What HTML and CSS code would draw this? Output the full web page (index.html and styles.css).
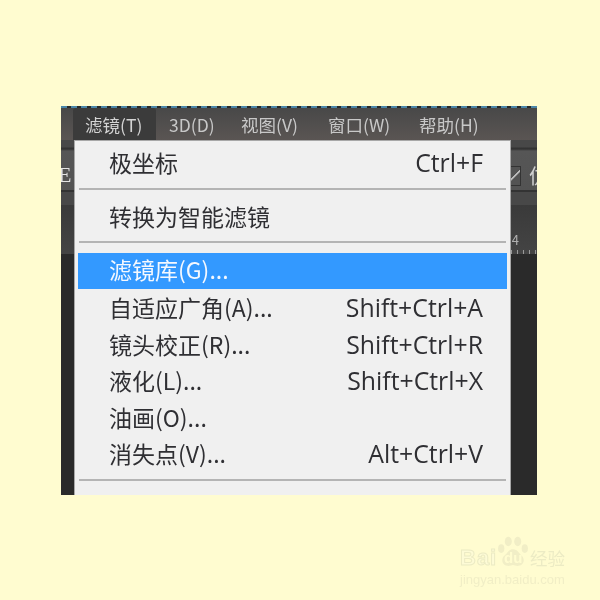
FILE: index.html
```html
<!DOCTYPE html>
<html lang="zh">
<head>
<meta charset="utf-8">
<title>滤镜菜单</title>
<link rel="stylesheet" href="styles.css">
</head>
<body>
<div class="window">
  <div class="menubar">
    <span class="top active">滤镜(T)</span>
    <span class="top">3D(D)</span>
    <span class="top">视图(V)</span>
    <span class="top">窗口(W)</span>
    <span class="top">帮助(H)</span>
  </div>
  <div class="toolbar">
    <span class="tool-left">E</span>
    <span class="tool-right"><span class="check"></span><span>仿</span></span>
  </div>
  <div class="ruler"><span class="ruler-num">4</span></div>
  <div class="canvas"></div>
  <div class="menu">
    <div class="row"><span>极坐标</span><span class="key">Ctrl+F</span></div>
    <div class="sep"></div>
    <div class="row"><span>转换为智能滤镜</span></div>
    <div class="sep"></div>
    <div class="row selected"><span>滤镜库(G)...</span></div>
    <div class="row"><span>自适应广角(A)...</span><span class="key">Shift+Ctrl+A</span></div>
    <div class="row"><span>镜头校正(R)...</span><span class="key">Shift+Ctrl+R</span></div>
    <div class="row"><span>液化(L)...</span><span class="key">Shift+Ctrl+X</span></div>
    <div class="row"><span>油画(O)...</span></div>
    <div class="row"><span>消失点(V)...</span><span class="key">Alt+Ctrl+V</span></div>
    <div class="sep last"></div>
  </div>
</div>
<div class="watermark">
  <div class="wm-top">
    <span class="wm-bai">Bai</span>
    <svg class="wm-paw" width="32" height="33" viewBox="0 0 40 42">
      <ellipse cx="5" cy="16" rx="4" ry="5.500"/>
      <ellipse cx="14" cy="7" rx="4.500" ry="6"/>
      <ellipse cx="26" cy="7" rx="4.500" ry="6"/>
      <ellipse cx="35" cy="16" rx="4" ry="5.500"/>
      <path d="M20 17c6 0 7 5 11 8 4 3 4 12-4 13-3 .4-5-1-7-1s-4 1.400-7 1c-8-1-8-10-4-13 4-3 5-8 11-8z"/>
    </svg>
    <span class="wm-du">du</span>
    <span class="wm-cn">经验</span>
  </div>
  <div class="wm-url">jingyan.baidu.com</div>
</div>
</body>
</html>
```
FILE: styles.css
```css
* { box-sizing: border-box; }
html, body { margin: 0; height: 600px; }
body {
  background: #fffcd0;
  padding: 106px 0 0 61px;
  overflow: hidden;
  position: relative;
  font-family: "Noto Sans CJK SC", "Liberation Sans", sans-serif;
}
.window {
  position: relative;
  width: 476px;
  height: 389px;
  background: #2a2a2a;
  display: flex;
  flex-direction: column;
  border-top: 2px dashed #4a86a8;
  overflow: hidden;
  filter: blur(0.5px);
}
.menubar {
  height: 32px;
  flex: none;
  background: linear-gradient(#484848, #5a5553);
  display: flex;
  padding-left: 12px;
  align-items: stretch;
}
.top {
  color: #c8c8c8;
  font-size: 17.500px;
  line-height: 34px;
  white-space: nowrap;
}
.top.active {
  background: #3b3b3b;
  color: #d4d4d4;
  border-radius: 3px 3px 0 0;
  width: 83px;
  padding-left: 12px;
}
.top:nth-child(2) { width: 85px; padding-left: 13px; }
.top:nth-child(3) { width: 87px; }
.top:nth-child(4) { width: 91px; }
.toolbar {
  height: 65px;
  flex: none;
  background: linear-gradient(#484848 0, #484848 7px, #333 8px, #333 9px, #565656 11px, #535353 50px, #333 50px, #333 52px, #484848 52px);
  display: flex;
  justify-content: space-between;
  align-items: center;
  color: #d0d0d0;
  font-size: 20px;
}
.tool-left {
  font-family: "Liberation Serif", serif;
  font-size: 22px;
  color: #e4e4e4;
  margin: 4px 0 0 -3px;
}
.tool-right {
  display: flex;
  align-items: center;
  gap: 8px;
  margin: 6px -12px 0 0;
}
.check {
  width: 13px;
  height: 20px;
  border: 1px solid #333;
  background: linear-gradient(135deg, #535353 46%, #bbb 48%, #bbb 54%, #535353 56%);
}
.ruler {
  height: 50px;
  flex: none;
  background:
    repeating-linear-gradient(90deg, #999 0 1px, transparent 1px 6px) right bottom / 26px 4px no-repeat,
    linear-gradient(#3a3a3a, #444);
  border-bottom: 1px solid #2a2a2a;
  display: flex;
  justify-content: flex-end;
  align-items: flex-end;
  padding: 0 18px 5px 0;
  color: #b0b0b0;
  font-size: 13px;
  line-height: 18px;
}
.canvas { flex: 1; background: #2a2a2a; }
.menu {
  position: absolute;
  left: 13px;
  top: 32px;
  width: 437px;
  height: 355px;
  background: #f0f0f0;
  border: 1px solid #a8a8a8;
  border-bottom: none;
  padding: 3px 3px 0 3px;
  color: #2f2f33;
  font-size: 23px;
}
.row {
  height: 36.400px;
  display: flex;
  justify-content: space-between;
  align-items: center;
  padding: 0 24px 0 31px;
  line-height: 36px;
  white-space: nowrap;
}
.key {
  font-family: "Open Sans", sans-serif;
  font-size: 24.800px;
}
.sep {
  height: 2px;
  margin: 8px 1px 7px 1px;
  background: #b4b4b4;
}
.sep + .row + .sep { margin-bottom: 10px; margin-top: 7px; }
.sep.last { margin-top: 8px; }
.selected {
  background: #3399ff;
  color: #f4f8ff;
  padding-bottom: 3px;
}
.watermark {
  position: absolute;
  left: 460px;
  top: 535px;
  width: 110px;
  color: #f1eec6;
  filter: blur(0.4px);
}
.wm-top {
  display: flex;
  align-items: flex-end;
  height: 33px;
  position: relative;
  font-family: "Liberation Sans", sans-serif;
  font-weight: 700;
  line-height: 20px;
}
.wm-bai {
  font-size: 22px;
  letter-spacing: 1px;
  width: 38px;
  color: #fdfbd6;
  -webkit-text-stroke: 1px #ecebc4;
}
.wm-paw {
  position: absolute;
  left: 37px;
  top: 1px;
  fill: #f1eec6;
}
.wm-du {
  position: relative;
  margin-left: 6px;
  width: 26px;
  font-size: 15px;
  color: #fffcd0;
}
.wm-cn {
  margin-left: 0;
  font-size: 17.500px;
  font-family: "Noto Sans CJK SC", sans-serif;
  font-weight: 400;
  white-space: nowrap;
  color: #ecebc4;
}
.wm-url {
  font-family: "Liberation Sans", sans-serif;
  font-size: 13px;
  line-height: 16px;
  margin-top: 4px;
  white-space: nowrap;
}
```
